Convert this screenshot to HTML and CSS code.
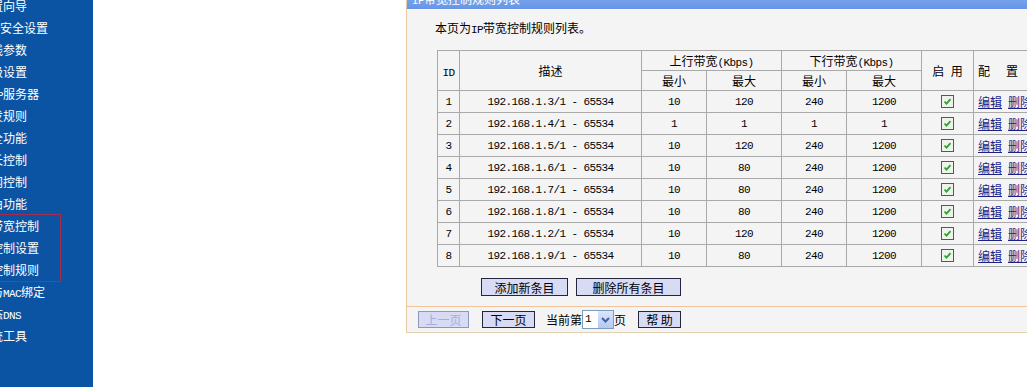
FILE: index.html
```html
<!DOCTYPE html>
<html lang="zh-CN">
<head>
    <meta charset="UTF-8">
    <title>IP带宽控制规则列表</title>
    <link rel="stylesheet" href="styles.css">
</head>
<body>
<div class="page">
    <nav class="menu">
        <div class="menu-list">
            <div class="item"><span class="cut">置</span>向导</div>
            <div class="item">安全设置</div>
            <div class="item"><span class="cut">线</span>参数</div>
            <div class="item"><span class="cut">级</span>设置</div>
            <div class="item"><span class="cut-en">P</span>服务器</div>
            <div class="item"><span class="cut">发</span>规则</div>
            <div class="item"><span class="cut">全</span>功能</div>
            <div class="item"><span class="cut">长</span>控制</div>
            <div class="item"><span class="cut">网</span>控制</div>
            <div class="item"><span class="cut">由</span>功能</div>
            <div class="group">
                <div class="item"><span class="cut">带</span>宽控制</div>
                <div class="item"><span class="cut">控</span>制设置</div>
                <div class="item"><span class="cut">控</span>制规则</div>
            </div>
            <div class="item"><span class="cut">与</span><span class="en">MAC</span>绑定</div>
            <div class="item"><span class="cut">态</span><span class="en">DNS</span></div>
            <div class="item"><span class="cut">统</span>工具</div>
        </div>
    </nav>

    <main class="main">
        <div class="panel">
            <div class="panel-title"><span class="en">IP</span>带宽控制规则列表</div>
            <div class="panel-body">
                <p class="intro">本页为<span class="en">IP</span>带宽控制规则列表。</p>
                <table class="rules">
                    <colgroup>
                        <col class="c-id"><col class="c-desc"><col class="c-min"><col class="c-max">
                        <col class="c-min"><col class="c-max"><col class="c-on"><col class="c-cfg">
                    </colgroup>
                    <thead>
                        <tr>
                            <th rowspan="2"><span class="en">ID</span></th>
                            <th rowspan="2">描述</th>
                            <th colspan="2">上行带宽<span class="en">(Kbps)</span></th>
                            <th colspan="2">下行带宽<span class="en">(Kbps)</span></th>
                            <th rowspan="2" class="on-head">启 用</th>
                            <th rowspan="2" class="cfg">配置</th>
                        </tr>
                        <tr><th>最小</th><th>最大</th><th>最小</th><th>最大</th></tr>
                    </thead>
                    <tbody id="rows"></tbody>
                </table>
                <div class="table-actions">
                    <button class="btn btn-add">添加新条目</button>
                    <button class="btn btn-clear">删除所有条目</button>
                </div>
            </div>
            <div class="panel-foot">
                <button class="btn btn-prev" disabled>上一页</button>
                <button class="btn btn-next">下一页</button>
                <span class="page-label">当前第</span>
                <span class="select">
                    <span class="select-val en">1</span>
                    <span class="select-arrow">
                        <svg width="9" height="6" viewBox="0 0 9 6"><path d="M1 1 L4.5 4.5 L8 1" fill="none" stroke="#3f62a8" stroke-width="2"/></svg>
                    </span>
                </span>
                <span>页</span>
                <button class="btn btn-help">帮 助</button>
            </div>
        </div>
    </main>
</div>

<script>
    const rules = [
        [1, '192.168.1.3/1 - 65534', 10, 120, 240, 1200],
        [2, '192.168.1.4/1 - 65534', 1, 1, 1, 1],
        [3, '192.168.1.5/1 - 65534', 10, 120, 240, 1200],
        [4, '192.168.1.6/1 - 65534', 10, 80, 240, 1200],
        [5, '192.168.1.7/1 - 65534', 10, 80, 240, 1200],
        [6, '192.168.1.8/1 - 65534', 10, 80, 240, 1200],
        [7, '192.168.1.2/1 - 65534', 10, 120, 240, 1200],
        [8, '192.168.1.9/1 - 65534', 10, 80, 240, 1200]
    ];

    const checkbox = '<svg width="13" height="13" viewBox="0 0 13 13">' +
        '<rect x="0.5" y="0.5" width="12" height="12" fill="#eef4ec" stroke="#3b6656"/>' +
        '<path d="M3.5 6.5 L5.5 8.6 L9.5 4.2" fill="none" stroke="#2ea02e" stroke-width="1.8"/></svg>';

    document.getElementById('rows').innerHTML = rules.map(r => `
        <tr>
            <td>${r[0]}</td><td>${r[1]}</td><td>${r[2]}</td><td>${r[3]}</td>
            <td>${r[4]}</td><td>${r[5]}</td>
            <td class="on">${checkbox}</td>
            <td class="ops"><a href="#">编辑</a><a href="#">删除</a></td>
        </tr>`).join('');
</script>
</body>
</html>
```

FILE: styles.css
```css
body {
    margin: 0;
    overflow: hidden;
    background: #fff;
    font-family: "Noto Sans CJK SC", sans-serif;
    font-size: 12px;
    color: #000;
}
.page {
    display: flex;
    height: 387px;
}
.en {
    font-family: "Liberation Mono", monospace;
    font-size: 11px;
    letter-spacing: -0.6px;
    line-height: 10px;
}

/* left menu */
.menu {
    width: 93px;
    flex-shrink: 0;
    background: #0b54a4;
    color: #fff;
    overflow: hidden;
}
.menu-list {
    margin-top: -5px;
}
.item {
    height: 22px;
    line-height: 22px;
    white-space: nowrap;
}
.cut {
    display: inline-block;
    width: 12px;
    margin-left: -9px;
}
.cut-en {
    display: inline-block;
    width: 6px;
    margin-left: -3px;
    font-family: "Liberation Mono", monospace;
    font-size: 11px;
}
.group {
    width: 60px;
    outline: 1px solid #a82a4c;
}

/* panel */
.main {
    flex: 1;
    min-width: 0;
    padding-left: 313px;
}
.panel {
    width: 700px;
    border-left: 1px solid #e7c8a2;
    background: #f4f4f4;
}
.panel-title {
    height: 22px;
    margin-top: -12px;
    line-height: 22px;
    padding-left: 5px;
    background: linear-gradient(#8bb2f0, #6795e6);
    color: #fff;
    border-bottom: 1px solid #fbfbfb;
    box-sizing: border-box;
}
.panel-body {
    padding: 10px 0 10px 28px;
}
.intro {
    margin: 0 0 14px;
    line-height: 16px;
}

/* table */
.rules {
    margin-left: 2px;
    width: 626px;
    border-collapse: collapse;
    table-layout: fixed;
}
.c-id { width: 22px; }
.c-desc { width: 182px; }
.c-min { width: 65px; }
.c-max { width: 75px; }
.c-on { width: 52px; }
.c-cfg { width: 90px; }
.rules th,
.rules td {
    border: 1px solid #a9a9a9;
    padding: 0;
    text-align: center;
    font-weight: normal;
    white-space: nowrap;
    overflow: hidden;
    line-height: 16px;
}
.rules thead tr {
    height: 20px;
}
.rules tbody tr {
    height: 22px;
}
.rules td {
    font-family: "Liberation Mono", monospace;
    font-size: 11px;
    letter-spacing: -0.6px;
}
.rules th.on-head {
    word-spacing: 4px;
}
.rules th.cfg {
    text-align: left;
    padding-left: 4px;
    letter-spacing: 16px;
}
.rules td.on svg {
    display: block;
    margin: 0 auto;
}
.rules td.ops {
    text-align: left;
    padding-left: 4px;
    font-family: "Noto Sans CJK SC", sans-serif;
    font-size: 12px;
    letter-spacing: 0;
}
.ops a {
    color: #1a2288;
    margin-right: 6px;
}

/* buttons */
.btn {
    padding: 0;
    border: 1px solid #25253d;
    background: #d7dbf4;
    color: #000;
    font-family: "Noto Sans CJK SC", sans-serif;
    font-size: 12px;
    line-height: 15px;
}
.table-actions {
    display: flex;
    gap: 8px;
    margin-top: 11px;
    padding-left: 46px;
}
.btn-add {
    width: 87px;
    height: 18px;
}
.btn-clear {
    width: 105px;
    height: 18px;
}

/* footer bar */
.panel-foot {
    display: flex;
    align-items: center;
    height: 25px;
    padding-left: 11px;
    border-top: 1px solid #f0c49c;
    border-bottom: 1px solid #e4cfae;
}
.panel-foot .btn {
    height: 17px;
}
.btn-prev {
    width: 51px;
    border-color: #8d95c2;
    color: #a6acdc;
}
.btn-next {
    width: 53px;
    margin-left: 13px;
}
.page-label {
    margin-left: 11px;
}
.select {
    display: flex;
    width: 32px;
    height: 19px;
    box-sizing: border-box;
    border: 1px solid #7f9db9;
    background: #fff;
}
.select-val {
    flex: 1;
    padding-left: 2px;
    line-height: 17px;
}
.select-arrow {
    width: 15px;
    display: flex;
    align-items: center;
    justify-content: center;
    background: linear-gradient(#dbe5fc, #b5c8f5);
}
.btn-help {
    width: 43px;
    margin-left: 12px;
}
```
